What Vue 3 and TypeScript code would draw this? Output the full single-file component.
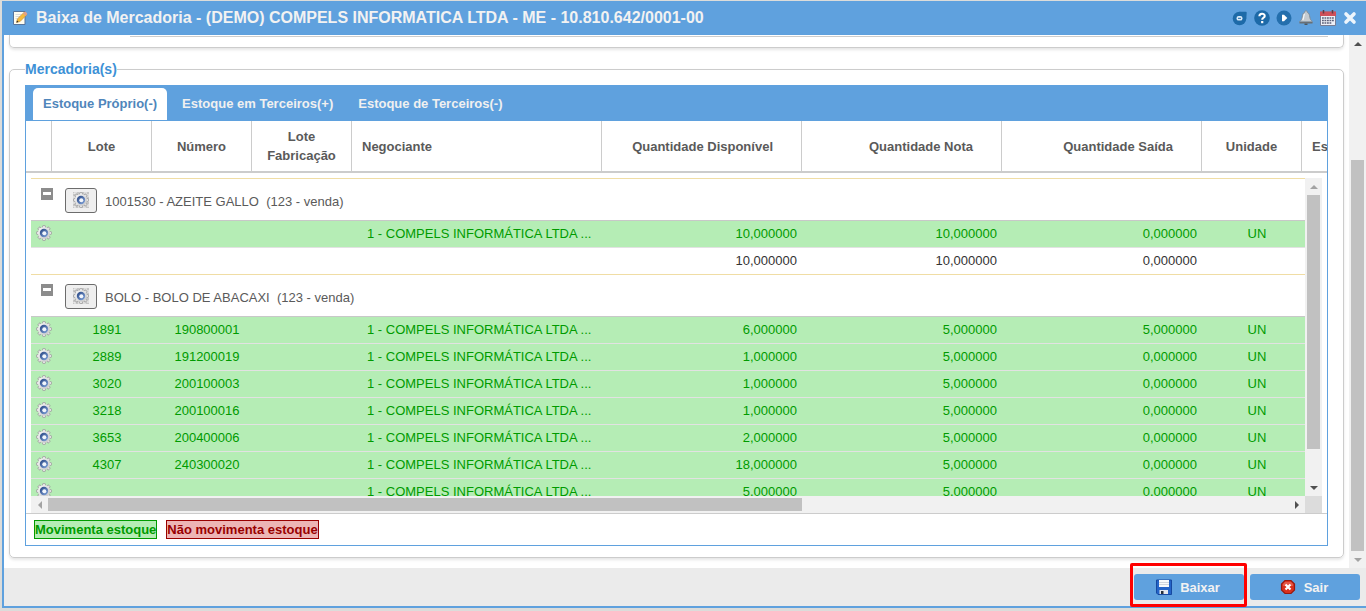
<script setup lang="ts">
import { ref } from 'vue'

interface Lot {
  lot: string
  number: string
  trader: string
  available: string
  invoice: string
  output: string
  unit: string
}

interface Group {
  title: string
  lots: Lot[]
  totals?: [string, string, string]
}

const trader = '1 - COMPELS INFORMÁTICA LTDA ...'

function makeLot(lot: string, number: string, available: string, invoice: string, output: string): Lot {
  return { lot, number, trader, available, invoice, output, unit: 'UN' }
}

const groups: Group[] = [
  {
    title: '1001530 - AZEITE GALLO\u00a0 (123 - venda)',
    lots: [makeLot('', '', '10,000000', '10,000000', '0,000000')],
    totals: ['10,000000', '10,000000', '0,000000'],
  },
  {
    title: 'BOLO - BOLO DE ABACAXI\u00a0 (123 - venda)',
    lots: [
      makeLot('1891', '190800001', '6,000000', '5,000000', '5,000000'),
      makeLot('2889', '191200019', '1,000000', '5,000000', '0,000000'),
      makeLot('3020', '200100003', '1,000000', '5,000000', '0,000000'),
      makeLot('3218', '200100016', '1,000000', '5,000000', '0,000000'),
      makeLot('3653', '200400006', '2,000000', '5,000000', '0,000000'),
      makeLot('4307', '240300020', '18,000000', '5,000000', '0,000000'),
      makeLot('', '', '5,000000', '5,000000', '0,000000'),
    ],
  },
]

const tabs = ['Estoque Próprio(-)', 'Estoque em Terceiros(+)', 'Estoque de Terceiros(-)']
const activeTab = ref(0)
</script>

<template>
  <div class="desktop">
    <svg class="defs" width="0" height="0" aria-hidden="true">
      <defs>
        <linearGradient id="gearFill" x1="0" y1="0" x2="1" y2="1">
          <stop offset="0" stop-color="#fafafa" />
          <stop offset="1" stop-color="#c4c4c4" />
        </linearGradient>
        <linearGradient id="hubFill" x1="0" y1="0" x2="1" y2="1">
          <stop offset="0" stop-color="#24427f" />
          <stop offset="1" stop-color="#86a8de" />
        </linearGradient>
        <symbol id="gear" viewBox="0 0 16 16">
          <g fill="#e2e2e2" stroke="#979797" stroke-width=".8">
            <rect x="6.500" y=".5" width="3" height="15" rx="1" />
            <rect x="6.500" y=".5" width="3" height="15" rx="1" transform="rotate(45 8 8)" />
            <rect x="6.500" y=".5" width="3" height="15" rx="1" transform="rotate(90 8 8)" />
            <rect x="6.500" y=".5" width="3" height="15" rx="1" transform="rotate(135 8 8)" />
          </g>
          <circle cx="8" cy="8" r="6.100" fill="url(#gearFill)" />
          <circle cx="8" cy="8" r="4.200" fill="url(#hubFill)" />
          <circle cx="8.300" cy="8.300" r="2" fill="#f2f6fc" />
        </symbol>
      </defs>
    </svg>

    <main class="window">
      <header class="titlebar">
        <svg class="icon" viewBox="0 0 16 16" aria-hidden="true">
          <path d="M1.500 1.500h11.500v13H1.500z" fill="#fffdf0" stroke="#56749b" />
          <path d="M3.500 4.500h6M3.500 6.500h5M3.500 8.500h3" stroke="#dcdcdc" />
          <path d="M4.500 12.500l.9-3.600 6.800-6.700 2.600 2.500-6.700 6.800z" fill="#f5bc3c" stroke="#b98a42" stroke-width=".6" />
          <path d="M11 3.400l1.500-1.500c.5-.4 1-.3 1.400.1l1 1c.4.5.4.9 0 1.400l-1.400 1.500z" fill="#e0a08a" />
          <path d="M4.500 12.500l.5-1.900 1.500 1.400z" fill="#222" />
        </svg>
        <h1>Baixa de Mercadoria - (DEMO) COMPELS INFORMATICA LTDA - ME - 10.810.642/0001-00</h1>
        <nav class="tools">
          <button type="button" aria-label="Chat">
            <svg viewBox="0 0 16 16"><circle cx="7.500" cy="8.500" r="6.800" fill="#1d6aa8" /><path d="M7.500 1.700h6.300q1 0 .9 1L14.300 8.500h-6.800z" fill="#1d6aa8" /><rect x="4.500" y="6" width="6" height="4.600" rx="2.200" fill="#dcebf8" /><path d="M6 8.300h3" stroke="#1d6aa8" /></svg>
          </button>
          <button type="button" aria-label="Ajuda">
            <svg viewBox="0 0 16 16"><circle cx="8" cy="8" r="7.800" fill="#1d6aa8" /><path d="M5.400 6.200c0-3.300 5.300-3.300 5.300-.3 0 1.900-2.500 1.800-2.500 3.800" fill="none" stroke="#fff" stroke-width="2.100" /><rect x="7.100" y="11" width="2.200" height="2.200" fill="#fff" /></svg>
          </button>
          <button type="button" aria-label="Executar">
            <svg viewBox="0 0 16 16"><circle cx="8" cy="8" r="7.500" fill="#246fad" /><path d="M6 4.800h2l3.300 3.200L8 11.200H6z" fill="#fff" /></svg>
          </button>
          <button type="button" aria-label="Notificações">
            <svg viewBox="0 0 16 16"><path d="M8 .8c.9 0 1.200.6 1.200 1.400 1.800.8 2.300 2.600 2.600 4.800.2 2 .9 3.200 2.700 4.800h-13C3.300 10.200 4 9 4.200 7c.3-2.200.8-4 2.600-4.800C6.800 1.400 7.100.8 8 .8z" fill="#c5cbd0" stroke="#7d858c" stroke-width=".8" /><path d="M6.500 4c-.9 1.500-.7 4-1.700 6" fill="none" stroke="#f5f7f8" stroke-width="1.200" /><path d="M1.500 12h13v1.500h-13z" fill="#686f75" /><path d="M6.500 13.500h3V15h-3z" fill="#50565b" /></svg>
          </button>
          <button type="button" aria-label="Calendário">
            <svg viewBox="0 0 16 16"><path d="M.5 2h15v13.500H.5z" fill="#eef0f7" stroke="#777d94" /><path d="M0 1.500h16V6H0z" fill="#d0505a" /><path d="M3.500 0v3.500M12.500 0v3.500" stroke="#5b3c45" stroke-width="1.500" /><path d="M2 8h12M2 10.500h12M2 13h10" stroke="#5b6079" stroke-width="1.600" stroke-dasharray="1.800 .7" /></svg>
          </button>
          <button type="button" aria-label="Fechar">
            <svg viewBox="0 0 16 16"><path d="M4 4l8 8M12 4l-8 8" stroke="#eef5fc" stroke-width="3.600" stroke-linecap="round" /></svg>
          </button>
        </nav>
      </header>

      <div class="viewport">
        <div class="content">
          <section class="previous"><div class="previous-line"></div></section>

          <fieldset class="goods">
            <legend>Mercadoria(s)</legend>
            <div class="panel">
              <div class="tabs" role="tablist">
                <button
                  v-for="(tab, index) in tabs"
                  :key="tab"
                  type="button"
                  role="tab"
                  class="tab"
                  :class="{ active: index === activeTab }"
                  :aria-selected="index === activeTab"
                  @click="activeTab = index"
                >{{ tab }}</button>
              </div>

              <div class="head-clip">
                <table class="grid">
                  <colgroup>
                    <col class="c-icon" /><col class="c-small" /><col class="c-small" /><col class="c-small" /><col class="c-name" />
                    <col class="c-qty" /><col class="c-qty" /><col class="c-qty" /><col class="c-small" /><col class="c-qty" />
                  </colgroup>
                  <thead>
                    <tr>
                      <th></th>
                      <th>Lote</th>
                      <th>Número</th>
                      <th>Lote Fabricação</th>
                      <th class="left">Negociante</th>
                      <th class="qty">Quantidade Disponível</th>
                      <th class="qty">Quantidade Nota</th>
                      <th class="qty">Quantidade Saída</th>
                      <th>Unidade</th>
                      <th class="left">Estoque</th>
                    </tr>
                  </thead>
                </table>
              </div>

              <div class="body-frame">
                <div class="body-clip">
                  <table class="grid">
                    <colgroup>
                      <col class="c-icon" /><col class="c-small" /><col class="c-small" /><col class="c-small" /><col class="c-name" />
                      <col class="c-qty" /><col class="c-qty" /><col class="c-qty" /><col class="c-small" /><col class="c-qty" />
                    </colgroup>
                    <tbody v-for="group in groups" :key="group.title">
                      <tr class="group">
                        <td colspan="10">
                          <div class="group-line">
                            <button type="button" class="collapse" aria-label="Recolher"></button>
                            <button type="button" class="group-action" aria-label="Opções do produto">
                              <svg viewBox="0 0 16 16">
                                <rect width="16" height="16" fill="#c6c6c6" />
                                <rect x="1" y="1" width="14" height="14" fill="none" stroke="#f5f5f5" stroke-dasharray="3 2" />
                                <use href="#gear" />
                              </svg>
                            </button>
                            <span>{{ group.title }}</span>
                          </div>
                        </td>
                      </tr>
                      <tr v-for="(row, index) in group.lots" :key="index" class="lot">
                        <td class="gear-cell"><button type="button" class="gear" aria-label="Opções do lote"><svg viewBox="0 0 16 16"><use href="#gear" /></svg></button></td>
                        <td>{{ row.lot }}</td>
                        <td>{{ row.number }}</td>
                        <td></td>
                        <td class="left">{{ row.trader }}</td>
                        <td class="right">{{ row.available }}</td>
                        <td class="right">{{ row.invoice }}</td>
                        <td class="right">{{ row.output }}</td>
                        <td>{{ row.unit }}</td>
                        <td></td>
                      </tr>
                      <tr v-if="group.totals" class="totals">
                        <td colspan="5"></td>
                        <td v-for="(total, index) in group.totals" :key="index" class="right">{{ total }}</td>
                        <td colspan="2"></td>
                      </tr>
                    </tbody>
                  </table>
                </div>
                <div class="scroll vertical inner-v" aria-hidden="true">
                  <span class="arrow"><i class="up dim"></i></span>
                  <span class="thumb"></span><span class="rest"></span>
                  <span class="arrow"><i class="down"></i></span>
                </div>
                <div class="scroll horizontal" aria-hidden="true">
                  <span class="arrow"><i class="prev dim"></i></span>
                  <span class="thumb"></span><span class="rest"></span>
                  <span class="arrow"><i class="next"></i></span>
                </div>
                <div class="corner"></div>
              </div>

              <div class="legend-row">
                <span class="key moves">Movimenta estoque</span>
                <span class="key still">Não movimenta estoque</span>
              </div>
            </div>
          </fieldset>
        </div>

        <div class="scroll vertical outer-v" aria-hidden="true">
          <span class="arrow"><i class="up"></i></span>
          <span class="rest"></span><span class="thumb"></span>
          <span class="arrow"><i class="down dim"></i></span>
        </div>
      </div>

      <footer class="actions">
        <div class="highlighted">
          <button type="button" class="action">
            <svg viewBox="0 0 16 16" aria-hidden="true">
              <path d="M.5 1h15v14.500H2L.5 14z" fill="#2464c8" stroke="#1749a0" />
              <path d="M3 1h10v7H3z" fill="#f7f9fc" /><path d="M3 3.500h10M3 5.500h10" stroke="#c4cbd5" stroke-width=".8" />
              <path d="M3.500 11h8.500v4H3.500z" fill="#e4e8ee" /><path d="M5 12h2.500v3H5z" fill="#27303c" />
            </svg>
            <span>Baixar</span>
          </button>
        </div>
        <button type="button" class="action">
          <svg viewBox="0 0 16 16" aria-hidden="true">
            <path d="M5 1.500h6L14.500 5v6L11 14.500H5L1.500 11V5z" fill="#d8301d" stroke="#97190f" stroke-width="1.200" />
            <path d="M5 3h6l2 2v2H3V5z" fill="#ee7867" opacity=".55" />
            <path d="M5.500 5.500l5 5M10.500 5.500l-5 5" stroke="#fff" stroke-width="2.200" />
          </svg>
          <span>Sair</span>
        </button>
      </footer>
    </main>
  </div>
</template>

<style>
body {
  margin: 0;
}
</style>

<style scoped>
.desktop {
  box-sizing: border-box;
  height: 100vh;
  min-height: 480px;
  padding: 1px 0 3px 2px;
  background: #dcdcda;
  overflow: hidden;
  font-family: "Liberation Sans", Arial, sans-serif;
  font-size: 13px;
  color: #5a5a5a;
}
.defs {
  position: absolute;
}
button {
  font: inherit;
  color: inherit;
  margin: 0;
  padding: 0;
  border: 0;
  background: none;
  cursor: pointer;
}
svg {
  display: block;
  width: 16px;
  height: 16px;
}
.window {
  box-sizing: border-box;
  height: 100%;
  display: flex;
  flex-direction: column;
  background: #fff;
  border-left: 2px solid #5fa1de;
  border-bottom: 2px solid #5fa1de;
}
.titlebar {
  display: flex;
  align-items: center;
  flex: 0 0 34px;
  gap: 8px;
  padding: 0 8px;
  background: #5fa1de;
}
h1 {
  flex: 1;
  margin: 0;
  font-size: 16px;
  line-height: 20px;
  font-weight: bold;
  color: #f2f2f2;
  white-space: nowrap;
}
.tools {
  display: flex;
  gap: 6px;
}
.viewport {
  flex: 1;
  min-height: 0;
  display: flex;
}
.content {
  flex: 1;
  min-width: 0;
  display: flex;
  flex-direction: column;
  padding: 0 5px 10px;
}
.previous {
  flex: 0 0 12px;
  padding: 0 15px 0 120px;
  border: 1px solid #ccc;
  border-top: 0;
  border-radius: 0 0 5px 5px;
  box-shadow: 0 2px 3px rgba(0, 0, 0, 0.1);
}
.previous-line {
  height: 1px;
  border-bottom: 1px solid #ccc;
}
.goods {
  flex: 1;
  min-height: 0;
  min-width: 0;
  display: flex;
  flex-direction: column;
  margin: 12px 0 0;
  padding: 7px 15px 11px;
  border: 1px solid #ccc;
  border-radius: 5px;
  box-shadow: 0 2px 3px rgba(0, 0, 0, 0.1);
}
legend {
  padding: 0;
  font-size: 14px;
  line-height: 18px;
  font-weight: bold;
  color: #3d91d6;
}
.panel {
  flex: 1;
  min-height: 0;
  display: flex;
  flex-direction: column;
  border: 1px solid #5fa1de;
  border-top: 0;
}
.tabs {
  flex: 0 0 36px;
  box-sizing: border-box;
  display: flex;
  gap: 5px;
  padding: 3px 7px 1px;
  background: #5fa1de;
}
.tab {
  padding: 0 10px 2px;
  font-weight: bold;
  color: #f0f0f0;
  border-radius: 5px 5px 0 0;
  white-space: nowrap;
}
.tab.active {
  background: #fff;
  color: #4f86bb;
}
.head-clip {
  flex: none;
  overflow: hidden;
  border-bottom: 2px solid #ccc;
}
.grid {
  width: 1476px;
  table-layout: fixed;
  border-collapse: separate;
  border-spacing: 0;
}
.c-icon {
  width: 26px;
}
.c-small {
  width: 100px;
}
.c-name {
  width: 250px;
}
.c-qty {
  width: 200px;
}
th {
  box-sizing: border-box;
  height: 50px;
  padding: 0 10px;
  line-height: 19px;
  border-right: 1px solid #ccc;
}
th.qty {
  padding-right: 28px;
  text-align: right;
}
.left {
  text-align: left;
}
.body-frame {
  flex: 1;
  min-height: 0;
  display: grid;
  grid-template-columns: minmax(0, 1fr) 17px;
  grid-template-rows: minmax(0, 1fr) 17px;
  padding: 5px 5px 0;
}
.body-clip {
  overflow: hidden;
}
td {
  box-sizing: border-box;
  height: 27px;
  padding: 0 10px 2px;
  text-align: center;
  white-space: nowrap;
  border-top: 1px solid #e2e2e2;
}
td.left {
  text-align: left;
}
td.right {
  text-align: right;
}
.group td {
  height: 42px;
  padding-bottom: 0;
  border-top: 1px solid #f0dda4;
}
.group-line {
  display: flex;
  align-items: center;
  gap: 8px;
  padding-top: 1px;
}
.collapse {
  align-self: flex-start;
  width: 12px;
  height: 12px;
  margin-right: 4px;
  box-sizing: border-box;
  border: solid #8c8c8c;
  border-width: 4px 2px 5px;
  background: #fff;
}
.group-action {
  box-sizing: border-box;
  width: 32px;
  height: 25px;
  padding: 3px 7px 4px;
  border: 1px solid #6c6c6c;
  border-radius: 3px;
  background: #efefef;
}
.group-line span {
  padding-top: 2px;
}
.lot td {
  background: #b5edb5;
  color: #009b00;
}
.group + .lot td {
  border-top-color: #c8c8c8;
}
.lot td.gear-cell {
  padding: 0 0 3px 5px;
}
.gear {
  display: block;
}
.totals {
  color: #333;
}
.scroll {
  display: flex;
  background: #f1f1f1;
}
.scroll.vertical {
  flex-direction: column;
}
.arrow {
  flex: 0 0 17px;
  display: flex;
  align-items: center;
  justify-content: center;
}
.arrow i {
  border: 4px solid transparent;
}
.arrow .up {
  border-top: 0;
  border-bottom-color: #505050;
}
.arrow .down {
  border-bottom: 0;
  border-top-color: #505050;
}
.arrow .prev {
  border-left: 0;
  border-right-color: #505050;
}
.arrow .next {
  border-right: 0;
  border-left-color: #505050;
}
.arrow .up.dim {
  border-bottom-color: #a3a3a3;
}
.arrow .down.dim {
  border-top-color: #a3a3a3;
}
.arrow .prev.dim {
  border-right-color: #a3a3a3;
}
.thumb {
  background: #c1c1c1;
}
.vertical .thumb {
  margin: 0 2px;
}
.horizontal .thumb {
  margin: 2px 0;
}
.inner-v .thumb {
  flex: 254;
}
.inner-v .rest {
  flex: 30;
}
.horizontal .thumb {
  flex: 754;
}
.horizontal .rest {
  flex: 486;
}
.outer-v {
  flex: 0 0 17px;
}
.outer-v .rest {
  flex: 108;
}
.outer-v .thumb {
  flex: 391;
}
.corner {
  background: #dcdcdc;
}
.legend-row {
  flex: 0 0 32px;
  display: flex;
  align-items: flex-start;
  gap: 9px;
  padding: 6px 8px 0;
  box-sizing: border-box;
  border-top: 1px solid #ccc;
}
.key {
  border: 1px solid;
  line-height: 17px;
  font-weight: bold;
  white-space: nowrap;
}
.moves {
  color: #009b00;
  background: #b5edb5;
}
.still {
  color: #990000;
  background: #edb5b5;
}
.actions {
  flex: 0 0 38px;
  display: flex;
  justify-content: flex-end;
  align-items: center;
  gap: 6px;
  padding: 0 6px;
  background: #ebebeb;
}
.highlighted {
  position: relative;
}
.highlighted::after {
  content: "";
  position: absolute;
  inset: -11px -3px -7px -4px;
  border: 3px solid #ff0000;
  border-radius: 2px;
  pointer-events: none;
}
.action {
  display: flex;
  align-items: center;
  justify-content: center;
  gap: 8px;
  width: 110px;
  height: 26px;
  padding-right: 2px;
  border-radius: 3px;
  background: #5fa1de;
  color: #f2f2f2;
  font-weight: bold;
}
</style>
